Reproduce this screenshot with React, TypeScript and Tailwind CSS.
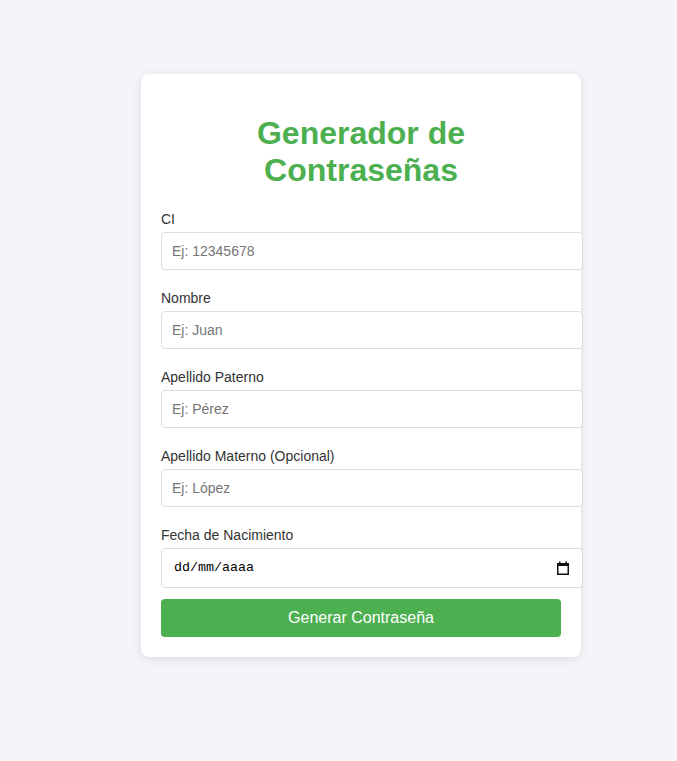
import React from "react";

function Field({ label, placeholder }: { label: string; placeholder: string }) {
  return (
    <div className="mb-[20px]">
      <label className="block text-[14px] leading-[16px] text-[#333] mb-[5px]">{label}</label>
      <input
        type="text"
        placeholder={placeholder}
        className="block w-[422px] h-[38px] px-[10px] border border-[#dddddd] rounded-[4px] text-[14px] text-[#333] placeholder:text-[#757575] bg-white outline-none"
        style={{ fontFamily: '"Liberation Sans", Arial, sans-serif' }}
      />
    </div>
  );
}

export default function App() {
  return (
    <div
      className="min-h-screen bg-[#f4f4f9] pt-[74px] pl-[141px] pb-[104px]"
      style={{ fontFamily: '"Liberation Sans", Arial, sans-serif' }}
    >
      <div className="w-[440px] bg-white rounded-[8px] shadow-[0_2px_10px_rgba(0,0,0,0.1)] p-[20px]">
        <h1 className="text-[32px] leading-[36.8px] font-bold text-center text-[#4CAF50] mt-[21.44px] mb-[21.6px]">
          Generador de
          <br />
          Contraseñas
        </h1>
        <Field label="CI" placeholder="Ej: 12345678" />
        <Field label="Nombre" placeholder="Ej: Juan" />
        <Field label="Apellido Paterno" placeholder="Ej: Pérez" />
        <Field label="Apellido Materno (Opcional)" placeholder="Ej: López" />
        <div>
          <label className="block text-[14px] leading-[16px] text-[#333] mb-[5px]">Fecha de Nacimiento</label>
          <div className="flex items-center justify-between w-[422px] h-[40px] pl-[12px] pr-[12px] border border-[#dddddd] rounded-[4px] bg-white">
            <span
              className="text-[13.33px] text-black"
              style={{ fontFamily: '"Liberation Mono", "DejaVu Sans Mono", monospace' }}
            >
              dd/mm/aaaa
            </span>
            <svg width="14" height="14" viewBox="0 0 14 14" className="block">
              <rect x="1" y="2" width="12" height="3" fill="#111" />
              <rect x="3" y="0.5" width="1.6" height="2.5" fill="#111" />
              <rect x="9.4" y="0.5" width="1.6" height="2.5" fill="#111" />
              <rect x="1.75" y="2.75" width="10.5" height="10.5" fill="none" stroke="#111" strokeWidth="1.5" />
            </svg>
          </div>
        </div>
        <button className="mt-[11px] w-[400px] h-[38px] bg-[#4CAF50] text-white text-[16px] rounded-[4px] block">
          Generar Contraseña
        </button>
      </div>
    </div>
  );
}
